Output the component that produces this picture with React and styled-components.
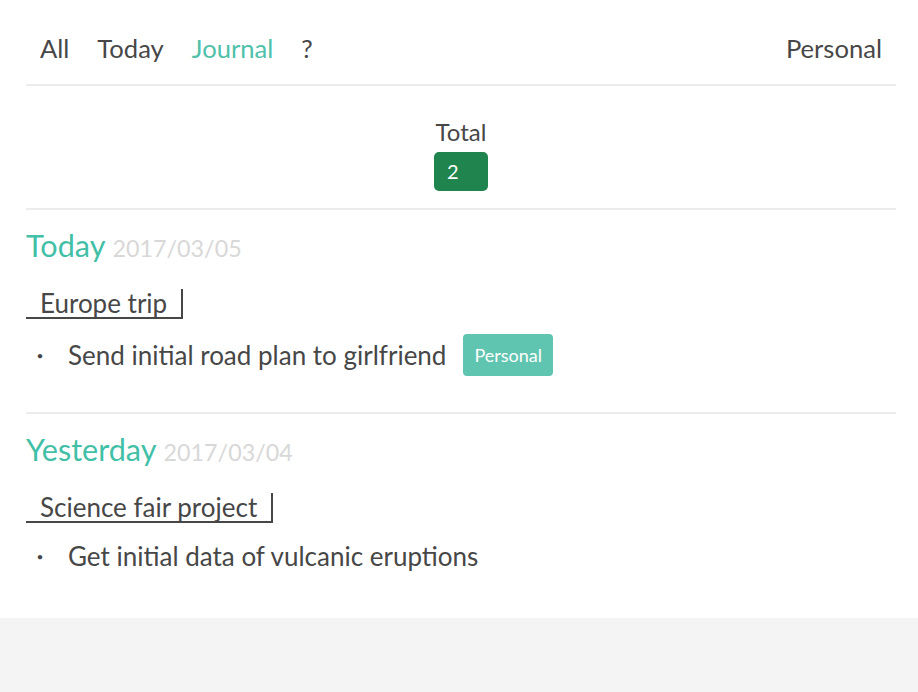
import React from "react";
import styled, { createGlobalStyle } from "styled-components";

const GlobalStyle = createGlobalStyle`
    html, body {
        margin: 0;
        background: #f4f4f4;
    }
    body {
        font-family: Lato, "Open Sans", sans-serif;
        color: #474747;
    }
`;

const Page = styled.div`
    background: #fff;
    padding: 0 22px 44px 26px;
`;

const Nav = styled.nav`
    display: flex;
    align-items: flex-start;
    height: 86px;
    box-sizing: border-box;
    padding-top: 32px;
    border-bottom: 2px solid #ececec;
`;

const NavItem = styled.a`
    padding: 0 14px;
    font-size: 25.6px;
    line-height: 32px;
    color: ${(p) => (p.$active ? "#4fc1aa" : "#474747")};
    margin-left: ${(p) => (p.$right ? "auto" : "0")};
    cursor: pointer;
`;

const Summary = styled.div`
    display: flex;
    flex-direction: column;
    align-items: center;
    padding: 32px 0 17px;
    border-bottom: 2px solid #ececec;
`;

const SummaryLabel = styled.div`
    font-size: 24px;
    line-height: 28px;
`;

const Badge = styled.div`
    margin-top: 6px;
    width: 54px;
    height: 39px;
    box-sizing: border-box;
    padding-left: 13px;
    border-radius: 5px;
    background: #1f844d;
    color: #fff;
    font-size: 20px;
    line-height: 39px;
`;

const Day = styled.section`
    padding: 18px 0 36px;
    border-bottom: 2px solid #ececec;

    &:last-child {
        border-bottom: none;
        padding-bottom: 0;
    }
`;

const DayTitle = styled.h2`
    margin: 0;
    font-weight: 400;
    font-size: 30.6px;
    line-height: 36px;
    color: #42c0a7;
`;

const DayDate = styled.span`
    font-size: 23.3px;
    color: #d8d8d8;
`;

const Project = styled.div`
    display: inline-block;
    margin-top: 23px;
    padding: 0 14px;
    font-size: 26px;
    line-height: 28px;
    border-bottom: 2px solid #474747;
    border-right: 2px solid #474747;
`;

const Item = styled.div`
    display: flex;
    align-items: center;
    min-height: 36px;
    margin-top: 15px;
    font-size: 26px;
`;

const Bullet = styled.span`
    width: 28px;
    margin-right: 14px;
    text-align: center;
    font-size: 12px;
`;

const Tag = styled.span`
    margin-left: 17px;
    padding: 0 11px;
    height: 42px;
    line-height: 42px;
    border-radius: 4px;
    background: #5fc4b0;
    color: #fff;
    font-size: 18px;
`;

const days = [
    {
        label: "Today",
        date: "2017/03/05",
        project: "Europe trip",
        items: [{ text: "Send initial road plan to girlfriend", tag: "Personal" }],
    },
    {
        label: "Yesterday",
        date: "2017/03/04",
        project: "Science fair project",
        items: [{ text: "Get initial data of vulcanic eruptions" }],
    },
];

const App = () => {
    return (
        <>
            <GlobalStyle />
            <Page>
                <Nav>
                    <NavItem>All</NavItem>
                    <NavItem>Today</NavItem>
                    <NavItem $active>Journal</NavItem>
                    <NavItem>?</NavItem>
                    <NavItem $right>Personal</NavItem>
                </Nav>
                <Summary>
                    <SummaryLabel>Total</SummaryLabel>
                    <Badge>2</Badge>
                </Summary>
                {days.map((day) => (
                    <Day key={day.label}>
                        <DayTitle>
                            {day.label} <DayDate>{day.date}</DayDate>
                        </DayTitle>
                        <Project>{day.project}</Project>
                        {day.items.map((item) => (
                            <Item key={item.text}>
                                <Bullet>•</Bullet>
                                {item.text}
                                {item.tag && <Tag>{item.tag}</Tag>}
                            </Item>
                        ))}
                    </Day>
                ))}
            </Page>
        </>
    );
};

export default App;
